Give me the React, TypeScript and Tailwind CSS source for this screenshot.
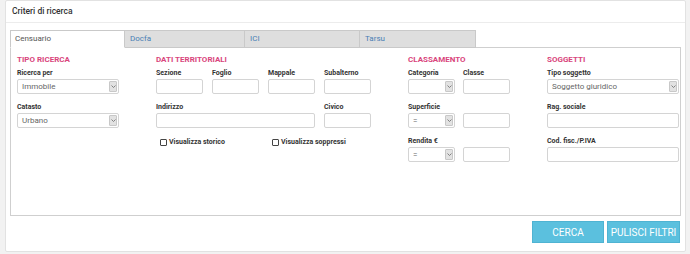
import React from 'react';

const font = { fontFamily: 'Roboto, "Liberation Sans", Arial, sans-serif' };

function Label({ children }: { children: React.ReactNode }) {
  return <div className="h-[9px] leading-[9px] text-[7px] font-bold text-[#333] mb-[1px]">{children}</div>;
}

function Input({ w }: { w: string }) {
  return <div className={`${w} h-[15px] border border-[#d4d4d4] rounded-[2px] bg-white`} />;
}

function Select({ w, value }: { w: string; value?: string }) {
  return (
    <div className={`${w} h-[15px] border border-[#d4d4d4] rounded-[2px] bg-white flex items-center justify-between pl-[4px] pr-[1px]`}>
      <span className="text-[8px] text-[#666] leading-none">{value}</span>
      <span className="w-[8px] h-[11px] bg-[#e2e2e2] border border-[#c8c8c8] rounded-[1px] flex items-center justify-center">
        <svg width="5" height="3" viewBox="0 0 5 3">
          <path d="M0.5 0.5 L2.5 2.5 L4.5 0.5" stroke="#777" strokeWidth="0.9" fill="none" />
        </svg>
      </span>
    </div>
  );
}

function Heading({ children }: { children: React.ReactNode }) {
  return <div className="h-[11px] leading-[11px] text-[8px] font-bold text-[#d9457c] mb-[4px]">{children}</div>;
}

function Check({ label }: { label: string }) {
  return (
    <div className="flex items-center gap-[2px]">
      <span className="w-[7px] h-[7px] border border-[#444] bg-white rounded-[1px]" />
      <span className="text-[7px] font-bold text-[#333] leading-none">{label}</span>
    </div>
  );
}

export default function App() {
  const tabs = ['Censuario', 'Docfa', 'ICI', 'Tarsu'];
  const widths = ['w-[115px]', 'w-[120px]', 'w-[115px]', 'w-[116px]'];

  return (
    <div className="w-[690px] h-[254px] bg-[#f2f2f2] pl-[5px] pr-[4px] pt-0" style={font}>
      <div className="h-[252px] bg-white border border-[#e2e2e2] rounded-[2px] flex flex-col">
        {/* Header */}
        <div className="h-[22px] border-b border-[#ececec] flex items-center pl-[6px]">
          <span className="text-[8.5px] font-medium text-[#333]">Criteri di ricerca</span>
        </div>

        <div className="px-[4px] pt-[7px]">
          {/* Tabs */}
          <div className="flex h-[18px]">
            {tabs.map((t, i) => (
              <div
                key={t}
                className={`${widths[i]} h-[18px] flex items-center text-[8px] border border-[#c9c9c9] ${
                  i === 0
                    ? 'bg-white border-b-white text-[#555] pl-[4px] z-10'
                    : 'bg-[#dedede] text-[#4a7fb5] pl-[5px] border-l-0'
                }`}
              >
                {t}
              </div>
            ))}
          </div>

          {/* Tab content */}
          <div className="h-[169px] -mt-px border border-[#cfcfcf] bg-white pl-[6px] pt-[6px] flex">
            {/* Tipo ricerca */}
            <div className="w-[102px]">
              <Heading>TIPO RICERCA</Heading>
              <Label>Ricerca per</Label>
              <Select w="w-[102px]" value="Immobile" />
              <div className="mt-[9px]">
                <Label>Catasto</Label>
                <Select w="w-[102px]" value="Urbano" />
              </div>
            </div>

            {/* Dati territoriali */}
            <div className="w-[215px] ml-[37px]">
              <Heading>DATI TERRITORIALI</Heading>
              <div className="flex gap-[9px]">
                {['Sezione', 'Foglio', 'Mappale', 'Subalterno'].map((l) => (
                  <div key={l}>
                    <Label>{l}</Label>
                    <Input w="w-[47px]" />
                  </div>
                ))}
              </div>
              <div className="flex gap-[9px] mt-[9px]">
                <div>
                  <Label>Indirizzo</Label>
                  <Input w="w-[159px]" />
                </div>
                <div>
                  <Label>Civico</Label>
                  <Input w="w-[47px]" />
                </div>
              </div>
              <div className="flex mt-[11px] pl-[4px]">
                <div className="w-[112px]">
                  <Check label="Visualizza storico" />
                </div>
                <Check label="Visualizza soppressi" />
              </div>
            </div>

            {/* Classamento */}
            <div className="w-[102px] ml-[37px]">
              <Heading>CLASSAMENTO</Heading>
              <div className="flex gap-[8px]">
                <div>
                  <Label>Categoria</Label>
                  <Select w="w-[47px]" />
                </div>
                <div>
                  <Label>Classe</Label>
                  <Input w="w-[47px]" />
                </div>
              </div>
              <div className="mt-[9px]">
                <Label>Superficie</Label>
                <div className="flex gap-[8px]">
                  <Select w="w-[47px]" value="=" />
                  <Input w="w-[47px]" />
                </div>
              </div>
              <div className="mt-[9px]">
                <Label>Rendita €</Label>
                <div className="flex gap-[8px]">
                  <Select w="w-[47px]" value="=" />
                  <Input w="w-[47px]" />
                </div>
              </div>
            </div>

            {/* Soggetti */}
            <div className="w-[132px] ml-[37px]">
              <Heading>SOGGETTI</Heading>
              <Label>Tipo soggetto</Label>
              <Select w="w-[132px]" value="Soggetto giuridico" />
              <div className="mt-[9px]">
                <Label>Rag. sociale</Label>
                <Input w="w-[132px]" />
              </div>
              <div className="mt-[9px]">
                <Label>Cod. fisc./P.IVA</Label>
                <Input w="w-[132px]" />
              </div>
            </div>
          </div>

          {/* Buttons */}
          <div className="flex justify-end gap-[3px] mt-[5px] pr-[1px]">
            <button className="w-[72px] h-[22px] bg-[#5bc0de] text-white text-[10px] border border-[#4fb3d2]">CERCA</button>
            <button className="w-[73px] h-[22px] bg-[#5bc0de] text-white text-[10px] border border-[#4fb3d2]">PULISCI FILTRI</button>
          </div>
        </div>
      </div>
    </div>
  );
}
